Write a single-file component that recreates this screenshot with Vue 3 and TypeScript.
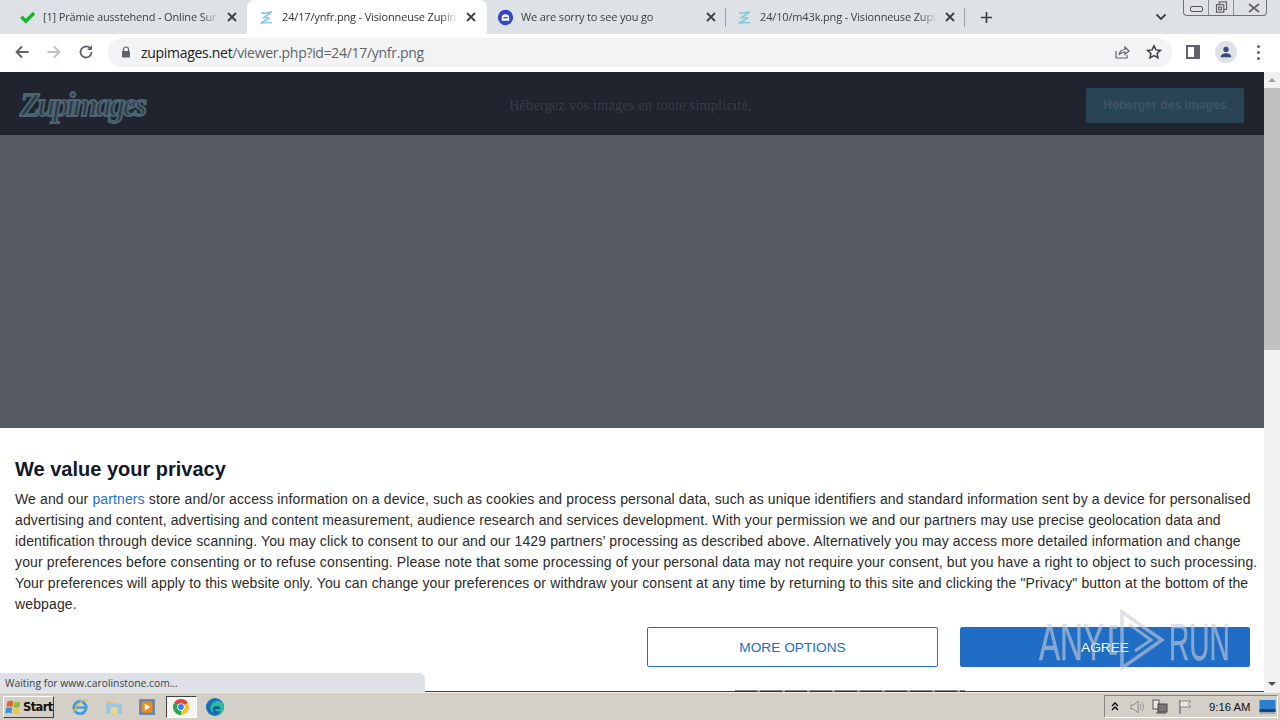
<script setup lang="ts">
interface Tab { title: string; active?: boolean; icon: string }
const tabs: Tab[] = [
  { title: '[1] Prämie ausstehend - Online Survey', icon: 'check' },
  { title: '24/17/ynfr.png - Visionneuse Zupimages', icon: 'z', active: true },
  { title: 'We are sorry to see you go', icon: 'bot' },
  { title: '24/10/m43k.png - Visionneuse Zupimages', icon: 'z2' }
]
const lines: string[] = [
  'advertising and content, advertising and content measurement, audience research and services development. With your permission we and our partners may use precise geolocation data and',
  'identification through device scanning. You may click to consent to our and our 1429 partners’ processing as described above. Alternatively you may access more detailed information and change',
  'your preferences before consenting or to refuse consenting. Please note that some processing of your personal data may not require your consent, but you have a right to object to such processing.',
  'Your preferences will apply to this website only. You can change your preferences or withdraw your consent at any time by returning to this site and clicking the "Privacy" button at the bottom of the',
  'webpage.'
]
</script>

<template>
  <div class="screen">
    <div class="tabstrip">
      <div v-for="t in tabs" :key="t.title" class="tab" :class="{ active: t.active }">
        <svg v-if="t.icon === 'check'" class="fav" viewBox="0 0 16 16"><path d="M1 8.500l2.400-2.300 3 3L13 2.600l2.300 2.300-8.900 8.900z" fill="#17b52e" /></svg>
        <svg v-else-if="t.icon === 'bot'" class="fav" viewBox="0 0 16 16"><circle cx="8" cy="8" r="7.200" fill="#3447c4" /><path d="M4.500 8.500a3.500 3.500 0 0 1 7 0v2.500h-7z" fill="#fff" /><rect x="6" y="7.500" width="4" height="1.300" fill="#3447c4" /></svg>
        <svg v-else class="fav" viewBox="0 0 16 16" fill="none" :stroke="t.icon === 'z' ? '#86c6e2' : '#7fcbd8'" stroke-width="1.500"><path d="M3 3.500c3 1 6 .6 10-.8C10.500 5 7 6.500 5.500 8c2.500-.4 5 .2 5 .8-2.500 1.500-6 3-8 4.700 3.500-1 7-1 10.500-.5" /></svg>
        <span class="title">{{ t.title }}</span>
        <svg class="close" viewBox="0 0 10 10"><path d="M1 1l8 8M9 1l-8 8" stroke="#3c4043" stroke-width="1.800" /></svg>
      </div>
      <svg class="plus" viewBox="0 0 14 14"><path d="M7 1v12M1 7h12" stroke="#3c4043" stroke-width="1.800" /></svg>
      <div class="spacer"></div>
      <svg class="chev" viewBox="0 0 12 8"><path d="M1.500 1.500L6 6l4.500-4.500" fill="none" stroke="#3c4043" stroke-width="1.800" /></svg>
      <div class="winbtns">
        <div class="wb min"><span></span></div>
        <div class="wb max"><svg viewBox="0 0 14 14" width="13" height="13"><rect x="4.500" y="1" width="8" height="8" fill="none" stroke="#444" /><rect x="1.500" y="4" width="8" height="8" fill="#dee1e6" stroke="#444" /><rect x="4" y="6.500" width="3" height="3" fill="none" stroke="#444" /></svg></div>
        <div class="wb x"><svg viewBox="0 0 14 10" width="14" height="10"><path d="M2 1l10 8M12 1L2 9" stroke="#666" stroke-width="1.800" /></svg></div>
      </div>
    </div>

    <div class="toolbar">
      <svg class="nav" viewBox="0 0 16 16"><path d="M14.500 8H2.500M8 2.500L2.500 8 8 13.500" fill="none" stroke="#5f6368" stroke-width="1.800" /></svg>
      <svg class="nav" viewBox="0 0 16 16"><path d="M1.500 8h12M8 2.500L13.500 8 8 13.500" fill="none" stroke="#bdc1c6" stroke-width="1.800" /></svg>
      <svg class="nav" viewBox="0 0 16 16"><path d="M13.500 8a5.500 5.500 0 1 1-1.600-3.900" fill="none" stroke="#5f6368" stroke-width="1.800" /><path d="M14 1v5h-5z" fill="#5f6368" /></svg>
      <div class="omni">
        <svg class="lock" viewBox="0 0 10 12"><path d="M2.500 5V3.500a2.500 2.500 0 0 1 5 0V5" fill="none" stroke="#5f6368" stroke-width="1.200" /><rect x="1" y="5" width="8" height="6.500" rx="1" fill="#5f6368" /></svg>
        <span class="url"><b>zupimages.net</b>/viewer.php?id=24/17/ynfr.png</span>
        <svg class="share" viewBox="0 0 16 16"><path d="M2 7v7h11v-3" fill="none" stroke="#5f6368" stroke-width="1.200" /><path d="M5 11c.5-3.500 3-5.500 6-5.500V3l4 4-4 3.500V8c-2.500 0-4.500 1-6 3z" fill="none" stroke="#5f6368" stroke-width="1.200" /></svg>
        <svg class="star" viewBox="0 0 16 16"><path d="M8 1.800l1.900 4.100 4.500.5-3.300 3 .9 4.400L8 11.600l-4 2.200.9-4.400-3.300-3 4.500-.5z" fill="none" stroke="#3c4043" stroke-width="1.500" /></svg>
      </div>
      <svg class="side" viewBox="0 0 14 14"><rect x="1" y="1" width="12" height="12" fill="none" stroke="#5f6368" stroke-width="2" /><rect x="8" y="1" width="5" height="12" fill="#5f6368" /></svg>
      <div class="avatar"><svg viewBox="0 0 16 16" width="14" height="14"><circle cx="8" cy="5" r="3" fill="#3c4a78" /><path d="M2 14c0-3 3-4.500 6-4.500s6 1.500 6 4.500z" fill="#3c4a78" /></svg></div>
      <div class="dots"><i></i><i></i><i></i></div>
    </div>

    <div class="viewport">
      <div class="page">
        <header class="site-head">
          <span class="logo">Zupimages</span>
          <span class="slogan">Hébergez vos images en toute simplicité.</span>
          <span class="host">Héberger des images</span>
        </header>
        <div class="site-body"></div>
        <section class="consent">
          <h2>We value your privacy</h2>
          <p>We and our <a>partners</a> store and/or access information on a device, such as cookies and process personal data, such as unique identifiers and standard information sent by a device for personalised</p>
          <p v-for="l in lines" :key="l">{{ l }}</p>
          <div class="actions">
            <button class="more">MORE OPTIONS</button>
            <button class="agree">AGREE</button>
          </div>
        </section>
        <div class="peek"></div>
        <div class="status">Waiting for www.carolinstone.com...</div>
      </div>
      <div class="scrollbar">
        <div class="sb-btn"><span class="up"></span></div>
        <div class="track"><div class="thumb"></div></div>
        <div class="sb-btn"><span class="down"></span></div>
      </div>
    </div>

    <div class="taskbar">
      <div class="start">
        <svg viewBox="0 0 16 16" width="17" height="16"><path d="M2 2.500c2-1.200 4-1 6 0L7 8C5 7 3 7 1 8z" fill="#e2622a" /><path d="M9 2.500c2 1 4 1 6 0L14 8c-2 1-4 1-6 0z" fill="#8dbb3c" /><path d="M.8 9c2-1 4-1 6 0l-1 5.500c-2-1-4-1-6 0z" fill="#3f8de0" /><path d="M8 9c2 1 4 1 6 0l-1 5.500c-2 1-4 1-6 0z" fill="#f3c536" /></svg>
        <span>Start</span>
      </div>
      <div class="apps">
        <svg class="app" viewBox="0 0 16 16"><circle cx="8" cy="8.500" r="5.500" fill="none" stroke="#3f9bdc" stroke-width="2.400" /><path d="M3 8.500h10" stroke="#3f9bdc" stroke-width="2" /><path d="M2 13C6 4 12 0 15 2" fill="none" stroke="#e8b93a" stroke-width="1.300" /></svg>
        <svg class="app" viewBox="0 0 16 16"><path d="M1 5h14v9H1z" fill="#9cc7dd" /><path d="M1 3h6l1 2H1z" fill="#e6c25a" /><rect x="5" y="8" width="6" height="6" fill="#eed789" /></svg>
        <svg class="app" viewBox="0 0 16 16"><rect x="1" y="1" width="14" height="14" fill="#5b86b3" /><rect x="3" y="3" width="10" height="10" rx="2" fill="#ee8a1d" /><path d="M6 5l5 3-5 3z" fill="#fff" /></svg>
        <div class="chrome-box">
          <svg viewBox="0 0 16 16" width="16" height="16"><path d="M8 8L1.070 4A8 8 0 0 1 14.930 4z" fill="#e0443a" /><path d="M8 8L1.070 4A8 8 0 0 0 8 16z" fill="#2ea44f" /><path d="M8 8L14.930 4A8 8 0 0 1 8 16z" fill="#f5c32c" /><circle cx="8" cy="8" r="3.800" fill="#fff" /><circle cx="8" cy="8" r="2.900" fill="#3f7fe8" /></svg>
        </div>
        <svg class="app" viewBox="0 0 16 16"><circle cx="8" cy="8" r="8" fill="#1272b8" /><path d="M16 9c0-5-4-7-7-6-3 .5-5 3-5 6 0 3 3 5.500 6.500 5.500C13 14.500 15 12 16 9z" fill="#2bbfa0" /><path d="M6 10c0-2 1.500-3 3.500-3s3.500 1 3.500 3H8c0 2 3 2.500 5 1.500-1 2-3 3-5 2.500-1.500-.5-2-2.500-2-4z" fill="#0e5ea8" /></svg>
      </div>
      <div class="spacer"></div>
      <div class="tray">
        <svg class="ti chevs" viewBox="0 0 8 10"><path d="M1 4l3-3 3 3M1 8l3-3 3 3" fill="none" stroke="#000" stroke-width="1.300" /></svg>
        <svg class="ti" viewBox="0 0 16 16"><path d="M2 6h3l4-4v12l-4-4H2z" fill="#d9d6cf" stroke="#8a8a8a" /><path d="M11 5c1 2 1 4 0 6M13 3.500c2 3 2 6 0 9" fill="none" stroke="#9a9a9a" /></svg>
        <svg class="ti net" viewBox="0 0 16 16"><rect x="1" y="1" width="6" height="9" fill="#e8e8e4" stroke="#555" /><rect x="6" y="5" width="9" height="8" fill="#777" stroke="#444" /><path d="M4 14h10" stroke="#444" /></svg>
        <svg class="ti" viewBox="0 0 16 16"><path d="M3 1v14" stroke="#777" stroke-width="1.500" /><path d="M3 2h11l-3 3 3 3H3z" fill="#e8e6e0" stroke="#888" /></svg>
        <span class="clock">9:16 AM</span>
        <svg class="ti desk" viewBox="0 0 16 14"><rect width="16" height="12" fill="#2c7fd0" /><rect y="9" width="16" height="3" fill="#15467e" /><rect y="12" width="16" height="2" fill="#98a8b8" /></svg>
      </div>
    </div>

    <div class="watermark">
      <span class="wm-any">ANY</span>
      <svg class="wm-play" viewBox="0 0 58 62" width="58" height="62" fill="none"><path d="M10 18H4v26h6" stroke-width="3.500" /><path d="M15 3v56l40-28z" stroke-width="3.500" /><path d="M22 15l22 16-16 11" stroke-width="3" /></svg>
      <span class="wm-run">RUN</span>
    </div>
  </div>
</template>

<style>
html, body { margin: 0; padding: 0; overflow: hidden; }
</style>

<style scoped>
.screen { position: relative; width: 1280px; height: 720px; display: flex; flex-direction: column; overflow: hidden; font-family: "Liberation Sans", Arial, sans-serif; background: #fff; }
.tabstrip { height: 34px; background: #dee1e6; display: flex; align-items: center; padding-left: 8px; position: relative; flex: none; }
.tab { position: relative; width: 239px; height: 34px; display: flex; align-items: center; box-sizing: border-box; padding: 0 10px 0 11px; flex: none; font: 11px/34px "Open Sans", sans-serif; color: #3c4043; }
.tab.active { background: #fff; border-radius: 8px 8px 0 0; color: #333; width: 240px; padding-right: 11px; }
.tab:nth-child(3) { width: 239px; padding-right: 10px; }
.tab:nth-child(3)::after, .tab:nth-child(4)::after { content: ""; position: absolute; right: 0; top: 8px; width: 1px; height: 19px; background: #9aa0a6; }
.fav { width: 17px; height: 17px; flex: none; margin-right: 7px; }
.tab:nth-child(3) .fav, .tab:nth-child(4) .fav { margin-left: -1px; }
.title { flex: 1; white-space: nowrap; overflow: hidden; -webkit-mask-image: linear-gradient(90deg, #000 90%, transparent); mask-image: linear-gradient(90deg, #000 90%, transparent); letter-spacing: -.15px; }
.close { width: 10px; height: 10px; margin-left: 8px; flex: none; }
.plus { width: 13px; height: 13px; margin-left: 15px; flex: none; }
.spacer { flex: 1; }
.chev { width: 12px; height: 8px; margin-right: 113px; flex: none; }
.winbtns { position: absolute; right: 13px; top: 0; height: 16px; width: 84px; display: flex; border: 1px solid #6d7278; border-top: 0; border-radius: 0 0 4px 4px; box-sizing: border-box; }
.wb { display: flex; align-items: center; justify-content: center; border-right: 1px solid #8a8f96; height: 15px; box-sizing: border-box; }
.wb:last-child { border-right: 0; }
.min { width: 25px; }
.min span { display: block; width: 11px; height: 4px; border: 1px solid #555; border-radius: 2px; margin-top: 3px; }
.max { width: 25px; }
.x { flex: 1; padding-left: 8px; }
.toolbar { height: 38px; background: #fff; display: flex; align-items: center; padding: 0 0 1px 14px; flex: none; box-sizing: border-box; }
.nav { width: 16px; height: 16px; margin: 0 16px 1px 0; flex: none; }
.omni { margin-left: -2px; width: 1064px; height: 29px; border-radius: 15px; background: #f1f3f4; display: flex; align-items: center; box-sizing: border-box; padding: 0 10px 0 13px; flex: none; }
.lock { width: 10px; height: 12px; flex: none; margin-right: 10px; margin-bottom: 1px; }
.url { flex: 1; font: 14px "Open Sans", sans-serif; color: #5f6368; letter-spacing: -.3px; white-space: nowrap; }
.url b { font-weight: 400; color: #202124; }
.share { width: 16px; height: 16px; margin: 0 16px 1px 0; }
.star { width: 16px; height: 16px; margin-bottom: 1px; }
.side { width: 14px; height: 14px; margin: 0 0 1px 14px; flex: none; }
.avatar { width: 22px; height: 22px; border-radius: 50%; background: #dee1e6; margin: 0 0 1px 15px; display: flex; align-items: center; justify-content: center; flex: none; }
.dots { margin: 0 0 1px 20px; display: flex; flex-direction: column; gap: 3px; }
.dots i { display: block; width: 3px; height: 3px; border-radius: 50%; background: #5f6368; }
.viewport { height: 620px; display: flex; flex: none; }
.page { position: relative; width: 1264px; height: 620px; display: flex; flex-direction: column; background: #565a64; overflow: hidden; }
.site-head { height: 63px; background: #20242f; display: flex; align-items: center; flex: none; box-sizing: border-box; padding: 4px 20px 0 20px; justify-content: space-between; }
.logo { font: italic 700 33px "Liberation Serif", serif; letter-spacing: -2.900px; color: #2e3b47; -webkit-text-stroke: 1.800px #4d6572; width: 128px; white-space: nowrap; }
.slogan { font: 14px "Liberation Serif", serif; color: #393d48; letter-spacing: .32px; margin-left: 27px; }
.host { width: 158px; height: 35px; box-sizing: border-box; background: #294455; border-radius: 2px; color: #3f5563; font: 700 12.200px/35px "Liberation Sans", sans-serif; text-align: center; }
.site-body { flex: 1; }
.consent { background: #fff; height: 264px; flex: none; box-sizing: border-box; padding: 30px 0 0 15px; border-bottom: 1px solid #444; color: #1a1a1a; }
.consent h2 { margin: 0 0 8px; font: 700 20px/23px "Liberation Sans", sans-serif; color: #111827; }
.consent p { margin: 0; font: 14px/21px "Liberation Sans", sans-serif; letter-spacing: .125px; white-space: nowrap; color: #2a2a2a; }
.consent a { color: #1f6fc4; }
.actions { display: flex; justify-content: flex-end; gap: 22px; padding-right: 14px; margin-top: 12px; }
.actions button { width: 291px; height: 40px; border-radius: 2px; font: 13.700px "Liberation Sans", sans-serif; box-sizing: border-box; padding: 0; }
.more { background: #fff; border: 1px solid #206dc5; color: #206dc5; }
.agree { width: 290px !important; background: #206dc5; border: 1px solid #206dc5; color: #fff; }
.peek { position: absolute; left: 735px; bottom: 0; width: 230px; height: 2px; opacity: .55; background: repeating-linear-gradient(90deg, #222 0 22px, #999 22px 25px); }
.status { position: absolute; left: 0; bottom: 0; width: 425px; height: 19px; background: #dee1e6; border-radius: 0 6px 0 0; font: 10.300px/20px "Open Sans", sans-serif; color: #3c4043; padding-left: 5px; box-sizing: border-box; }
.scrollbar { width: 16px; background: #f1f1f1; display: flex; flex-direction: column; flex: none; }
.sb-btn { height: 16px; display: flex; align-items: center; justify-content: center; flex: none; }
.up { width: 0; height: 0; border: 4px solid transparent; border-top: 0; border-bottom: 4px solid #a3a3a3; }
.down { width: 0; height: 0; border: 4px solid transparent; border-bottom: 0; border-top: 4px solid #505050; }
.track { flex: 1; }
.thumb { height: 262px; background: #c1c1c1; }
.taskbar { height: 28px; background: #d4d0c8; border-top: 1px solid #f0eee8; box-sizing: border-box; display: flex; align-items: center; flex: none; }
.start { margin-left: 3px; width: 51px; height: 22px; box-sizing: border-box; border: 1px solid; border-color: #fff #404040 #404040 #fff; display: flex; align-items: center; gap: 1px; padding-left: 1px; font: 700 11.500px "DejaVu Sans", sans-serif; color: #111; letter-spacing: -.6px; }
.apps { display: grid; grid-template-columns: repeat(5, 33.750px); justify-items: center; align-items: center; margin-left: 9px; }
.app { width: 18px; height: 18px; }
.chrome-box { width: 31px; height: 22px; display: flex; align-items: center; justify-content: center; border: 1px solid; border-color: #404040 #fff #fff #404040; background: #f6f5f2; box-sizing: border-box; }
.tray { height: 23px; width: 174px; margin-right: 2px; border: 1px solid; border-color: #8a8780 #fff #fff #8a8780; box-sizing: border-box; display: flex; align-items: center; padding-left: 6px; }
.ti { width: 16px; height: 16px; margin-right: 7px; flex: none; }
.net { margin-right: 9px; }
.chevs { width: 8px; height: 10px; margin-right: 10px; }
.clock { font: 11.300px "Liberation Sans", sans-serif; color: #111; margin-left: 9px; white-space: nowrap; }
.desk { margin: 0 0 0 9px; width: 17px; height: 14px; }
.watermark { position: absolute; left: 1039px; top: 609px; width: 195px; height: 62px; pointer-events: none; color: rgba(200, 205, 215, .6); font: 51px/62px "Liberation Sans", sans-serif; -webkit-text-stroke: .5px rgba(200, 205, 215, .5); }
.watermark span { position: absolute; top: 3px; transform-origin: left center; white-space: nowrap; }
.wm-any { left: 0; transform: scaleX(.62); }
.wm-run { left: 130px; transform: scaleX(.55); }
.wm-play { position: absolute; left: 68px; top: 0; stroke: rgba(200, 205, 215, .6); }
</style>
